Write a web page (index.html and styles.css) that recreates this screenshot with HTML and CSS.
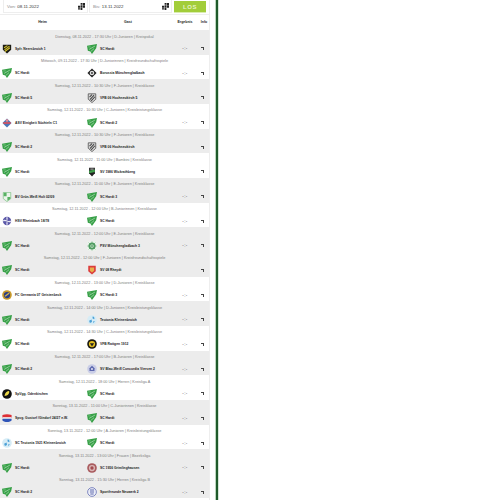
FILE: index.html
```html
<!DOCTYPE html>
<html lang="de">
<head>
  <meta charset="UTF-8" />
  <title>Spielplan - SC Hardt</title>
  <link rel="stylesheet" href="styles.css">
</head>
<body>
  <svg class="defs" width="0" height="0">
    <symbol id="hardt" viewBox="0 0 24 24">
      <path d="M0 4 L24 0 L22 10 L12 24 L8 18 L2 16 Z" fill="#37a047"/>
      <path d="M5 13 L19 5 M9 18 L17 11" fill="none" stroke="#bfe4c3" stroke-width="1.500"/>
      <path d="M3 7 L9 7" fill="none" stroke="#8fd097" stroke-width="1.500"/>
    </symbol>
    <symbol id="neers" viewBox="0 0 24 24">
      <path d="M2 2 H22 V14 L12 23 L2 14 Z" fill="#1c1c14"/>
      <path d="M6 14 L18 5 M7 18 L19 9 M5 9 L13 4" stroke="#d8c52c" stroke-width="2.500"/>
    </symbol>
    <symbol id="borussia" viewBox="0 0 24 24">
      <path d="M12 1 L23 12 L12 23 L1 12 Z" fill="#222"/>
      <circle cx="12" cy="12" r="5.500" fill="#ddd"/>
      <circle cx="12" cy="12" r="2.500" fill="#444"/>
    </symbol>
    <symbol id="vfb" viewBox="0 0 24 24">
      <path d="M3 2 H21 V15 L12 23 L3 15 Z" fill="#ddd" stroke="#555" stroke-width="2"/>
      <path d="M7 16 L17 5 M10 19 L19 9 M6 10 L12 4" stroke="#444" stroke-width="2.500"/>
    </symbol>
    <symbol id="asv" viewBox="0 0 24 24">
      <path d="M12 1 L23 12 L12 23 L1 12 Z" fill="#4a78b8"/>
      <path d="M3 10 H21 V14 H3 Z" fill="#d9505c"/>
      <circle cx="12" cy="6" r="3" fill="#e98a90"/>
    </symbol>
    <symbol id="wick" viewBox="0 0 24 24">
      <path d="M5 2 H19 V15 L12 23 L5 15 Z" fill="#222"/>
      <path d="M5 9 L19 6 V12 L5 15 Z" fill="#3f9c4a"/>
      <path d="M8 5 H16" stroke="#ddd" stroke-width="2"/>
    </symbol>
    <symbol id="holt" viewBox="0 0 24 24">
      <path d="M3 1 H21 V16 L12 23 L3 16 Z" fill="#eaf5ea" stroke="#6dbb75" stroke-width="1.500"/>
      <path d="M4 2 H11 V10 H4 Z M13 12 H20 V17 L13 21 Z" fill="#58b163"/>
    </symbol>
    <symbol id="vsv" viewBox="0 0 24 24">
      <circle cx="12" cy="12" r="10" fill="#5b58a8"/>
      <path d="M3 12 C8 6 16 18 21 12 M12 3 V9 M12 15 V21" stroke="#e8e8f2" stroke-width="3" fill="none"/>
    </symbol>
    <symbol id="psv" viewBox="0 0 24 24">
      <path d="M1 1 H23 V23 H1 Z" fill="#edf5ed"/>
      <circle cx="12" cy="12" r="8.500" fill="#4f9c62"/>
      <circle cx="12" cy="12" r="4.500" fill="#d8ecd9"/>
      <path d="M12 1 V23 M1 12 H23 M4 4 L20 20 M20 4 L4 20" stroke="#4f9c62" stroke-width="2" opacity=".7"/>
    </symbol>
    <symbol id="rheydt" viewBox="0 0 24 24">
      <path d="M3 2 H21 V15 L12 23 L3 15 Z" fill="#dc3c3c"/>
      <path d="M7 6 H17 V14 L12 18 L7 14 Z" fill="#e6b04a"/>
    </symbol>
    <symbol id="germania" viewBox="0 0 24 24">
      <circle cx="12" cy="12" r="11.500" fill="#c99a2b"/>
      <circle cx="12" cy="12" r="7.500" fill="#2c3f86"/>
      <path d="M7 15 L17 8" stroke="#dcb84a" stroke-width="3"/>
    </symbol>
    <symbol id="teutonia" viewBox="0 0 24 24">
      <circle cx="12" cy="12" r="11.500" fill="#d6ecf6"/>
      <path d="M14 3 C18 5 19 8 17 10 L13 8 Z M5 14 L11 11 L12 17 L7 19 Z M15 15 L19 15 L15 20 Z" fill="#4b9fd6"/>
    </symbol>
    <symbol id="rattgen" viewBox="0 0 24 24">
      <circle cx="12" cy="12" r="11.500" fill="#1b1a12"/>
      <circle cx="12" cy="12" r="7.500" fill="#e4c020"/>
      <path d="M7 10 H17 L12 18 Z" fill="#222"/>
    </symbol>
    <symbol id="viersen" viewBox="0 0 24 24">
      <circle cx="12" cy="12" r="11.500" fill="#c9cde6"/>
      <path d="M12 4 L18 10 V17 H6 V10 Z" fill="#5d68ae"/>
      <circle cx="12" cy="12" r="2.500" fill="#dfe2f2"/>
    </symbol>
    <symbol id="odenk" viewBox="0 0 24 24">
      <circle cx="12" cy="12" r="11.500" fill="#111"/>
      <path d="M6 17 C7 9 12 5 17 5 C19 10 14 17 6 17 Z" fill="#ecd848"/>
    </symbol>
    <symbol id="gustorf" viewBox="0 0 24 24">
      <path d="M1 5 C8 2 16 2 23 5 V12 H1 Z" fill="#dd2f35"/>
      <path d="M1 10 H23 V14 H1 Z" fill="#f2f2f2"/>
      <path d="M1 14 H23 V18 C16 23 8 23 1 18 Z" fill="#2f55b8"/>
    </symbol>
    <symbol id="grim" viewBox="0 0 24 24">
      <circle cx="12" cy="12" r="11.500" fill="#a95b5e"/>
      <circle cx="12" cy="12" r="7.500" fill="#d9b6b6"/>
      <circle cx="12" cy="12" r="4" fill="#a24a4e"/>
    </symbol>
    <symbol id="neuwerk" viewBox="0 0 24 24">
      <circle cx="12" cy="12" r="10.500" fill="#eef0f8" stroke="#6a74b8" stroke-width="2"/>
      <path d="M7 7 H17 M7 12 H17 M8 17 H16" stroke="#5d68ae" stroke-width="2.500"/>
    </symbol>
  </svg>

  <main class="plan">
    <form class="filter">
      <label class="date-field from">
        <span class="date-label">Von:</span> <span class="date-value">08.11.2022</span>
        <svg class="cal" viewBox="0 0 8 8"><path d="M3 0H5V2H3ZM5.500 0H8V3H5.500ZM0 3H2.500V5.500H0ZM3 2.500H5V5H3ZM5.500 3.500H8V5.500H5.500ZM3 5.500H5V8H3ZM0 6H2.500V7.500H0Z"/></svg>
      </label>
      <label class="date-field to">
        <span class="date-label">Bis:</span> <span class="date-value">13.11.2022</span>
        <svg class="cal" viewBox="0 0 8 8"><path d="M3 0H5V2H3ZM5.500 0H8V3H5.500ZM0 3H2.500V5.500H0ZM3 2.500H5V5H3ZM5.500 3.500H8V5.500H5.500ZM3 5.500H5V8H3ZM0 6H2.500V7.500H0Z"/></svg>
      </label>
      <button class="go" type="button">LOS</button>
    </form>

    <div class="head-row">
      <div>Heim</div>
      <div>Gast</div>
      <div>Ergebnis</div>
      <div>Info</div>
    </div>

    <section class="match grey">
      <p class="when">Dienstag, 08.11.2022 - 17:30 Uhr | D-Junioren | Kreispokal</p>
      <div class="teams">
        <div class="team"><svg class="logo"><use href="#neers"/></svg>Spfr. Neersbroich 1</div>
        <div class="team"><svg class="logo"><use href="#hardt"/></svg>SC Hardt</div>
        <div class="result">-:-</div>
        <div class="info"><i></i></div>
      </div>
    </section>

    <section class="match">
      <p class="when">Mittwoch, 09.11.2022 - 17:30 Uhr | D-Juniorinnen | Kreisfreundschaftsspiele</p>
      <div class="teams">
        <div class="team"><svg class="logo"><use href="#hardt"/></svg>SC Hardt</div>
        <div class="team"><svg class="logo"><use href="#borussia"/></svg>Borussia Mönchengladbach</div>
        <div class="result">-:-</div>
        <div class="info"><i></i></div>
      </div>
    </section>

    <section class="match grey">
      <p class="when">Samstag, 12.11.2022 - 10:30 Uhr | F-Junioren | Kreisklasse</p>
      <div class="teams">
        <div class="team"><svg class="logo"><use href="#hardt"/></svg>SC Hardt 5</div>
        <div class="team"><svg class="logo"><use href="#vfb"/></svg>VFB 06 Hochneukirch 5</div>
        <div class="result"></div>
        <div class="info"><i></i></div>
      </div>
    </section>

    <section class="match">
      <p class="when">Samstag, 12.11.2022 - 10:30 Uhr | C-Junioren | Kreisleistungsklasse</p>
      <div class="teams">
        <div class="team"><svg class="logo"><use href="#asv"/></svg>ASV Einigkeit Süchteln C1</div>
        <div class="team"><svg class="logo"><use href="#hardt"/></svg>SC Hardt 2</div>
        <div class="result">-:-</div>
        <div class="info"><i></i></div>
      </div>
    </section>

    <section class="match grey">
      <p class="when">Samstag, 12.11.2022 - 10:30 Uhr | F-Junioren | Kreisklasse</p>
      <div class="teams">
        <div class="team"><svg class="logo"><use href="#hardt"/></svg>SC Hardt 2</div>
        <div class="team"><svg class="logo"><use href="#vfb"/></svg>VFB 06 Hochneukirch</div>
        <div class="result"></div>
        <div class="info"><i></i></div>
      </div>
    </section>

    <section class="match">
      <p class="when">Samstag, 12.11.2022 - 11:00 Uhr | Bambini | Kreisklasse</p>
      <div class="teams">
        <div class="team"><svg class="logo"><use href="#hardt"/></svg>SC Hardt</div>
        <div class="team"><svg class="logo"><use href="#wick"/></svg>SV 1986 Wickrathberg</div>
        <div class="result"></div>
        <div class="info"><i></i></div>
      </div>
    </section>

    <section class="match grey">
      <p class="when">Samstag, 12.11.2022 - 11:00 Uhr | E-Junioren | Kreisklasse</p>
      <div class="teams">
        <div class="team"><svg class="logo"><use href="#holt"/></svg>BV Grün-Weiß Holt 02/09</div>
        <div class="team"><svg class="logo"><use href="#hardt"/></svg>SC Hardt 3</div>
        <div class="result">-:-</div>
        <div class="info"><i></i></div>
      </div>
    </section>

    <section class="match">
      <p class="when">Samstag, 12.11.2022 - 12:00 Uhr | B-Juniorinnen | Kreisklasse</p>
      <div class="teams">
        <div class="team"><svg class="logo"><use href="#vsv"/></svg>HSV Rheinbach 18/78</div>
        <div class="team"><svg class="logo"><use href="#hardt"/></svg>SC Hardt</div>
        <div class="result">-:-</div>
        <div class="info"><i></i></div>
      </div>
    </section>

    <section class="match grey">
      <p class="when">Samstag, 12.11.2022 - 12:00 Uhr | E-Junioren | Kreisklasse</p>
      <div class="teams">
        <div class="team"><svg class="logo"><use href="#hardt"/></svg>SC Hardt</div>
        <div class="team"><svg class="logo"><use href="#psv"/></svg>PSV Mönchengladbach 3</div>
        <div class="result">-:-</div>
        <div class="info"><i></i></div>
      </div>
    </section>

    <section class="match grey">
      <p class="when">Samstag, 12.11.2022 - 12:00 Uhr | F-Junioren | Kreisfreundschaftsspiele</p>
      <div class="teams">
        <div class="team"><svg class="logo"><use href="#hardt"/></svg>SC Hardt</div>
        <div class="team"><svg class="logo"><use href="#rheydt"/></svg>SV 08 Rheydt</div>
        <div class="result"></div>
        <div class="info"><i></i></div>
      </div>
    </section>

    <section class="match">
      <p class="when">Samstag, 12.11.2022 - 13:00 Uhr | D-Junioren | Kreisklasse</p>
      <div class="teams">
        <div class="team"><svg class="logo"><use href="#germania"/></svg>FC Germania 07 Geistenbeck</div>
        <div class="team"><svg class="logo"><use href="#hardt"/></svg>SC Hardt 3</div>
        <div class="result">-:-</div>
        <div class="info"><i></i></div>
      </div>
    </section>

    <section class="match grey">
      <p class="when">Samstag, 12.11.2022 - 14:00 Uhr | D-Junioren | Kreisleistungsklasse</p>
      <div class="teams">
        <div class="team"><svg class="logo"><use href="#hardt"/></svg>SC Hardt</div>
        <div class="team"><svg class="logo"><use href="#teutonia"/></svg>Teutonia Kleinenbroich</div>
        <div class="result">-:-</div>
        <div class="info"><i></i></div>
      </div>
    </section>

    <section class="match">
      <p class="when">Samstag, 12.11.2022 - 14:30 Uhr | C-Junioren | Kreisleistungsklasse</p>
      <div class="teams">
        <div class="team"><svg class="logo"><use href="#hardt"/></svg>SC Hardt</div>
        <div class="team"><svg class="logo"><use href="#rattgen"/></svg>VFB Rattgen 1912</div>
        <div class="result">-:-</div>
        <div class="info"><i></i></div>
      </div>
    </section>

    <section class="match grey">
      <p class="when">Samstag, 12.11.2022 - 17:00 Uhr | B-Junioren | Kreisklasse</p>
      <div class="teams">
        <div class="team"><svg class="logo"><use href="#hardt"/></svg>SC Hardt 2</div>
        <div class="team"><svg class="logo"><use href="#viersen"/></svg>SV Blau-Weiß Concordia Viersen 2</div>
        <div class="result">-:-</div>
        <div class="info"><i></i></div>
      </div>
    </section>

    <section class="match">
      <p class="when">Samstag, 12.11.2022 - 18:00 Uhr | Herren | Kreisliga A</p>
      <div class="teams">
        <div class="team"><svg class="logo"><use href="#odenk"/></svg>SpVgg. Odenkirchen</div>
        <div class="team"><svg class="logo"><use href="#hardt"/></svg>SC Hardt</div>
        <div class="result">-:-</div>
        <div class="info"><i></i></div>
      </div>
    </section>

    <section class="match grey">
      <p class="when">Sonntag, 13.11.2022 - 11:00 Uhr | C-Juniorinnen | Kreisklasse</p>
      <div class="teams">
        <div class="team"><svg class="logo"><use href="#gustorf"/></svg>Spvg. Gustorf /Gindorf 24/27 e.W.</div>
        <div class="team"><svg class="logo"><use href="#hardt"/></svg>SC Hardt</div>
        <div class="result">-:-</div>
        <div class="info"><i></i></div>
      </div>
    </section>

    <section class="match">
      <p class="when">Sonntag, 13.11.2022 - 12:00 Uhr | A-Junioren | Kreisleistungsklasse</p>
      <div class="teams">
        <div class="team"><svg class="logo"><use href="#teutonia"/></svg>SC Teutonia 1921 Kleinenbroich</div>
        <div class="team"><svg class="logo"><use href="#hardt"/></svg>SC Hardt</div>
        <div class="result">-:-</div>
        <div class="info"><i></i></div>
      </div>
    </section>

    <section class="match grey">
      <p class="when">Sonntag, 13.11.2022 - 13:00 Uhr | Frauen | Bezirksliga</p>
      <div class="teams">
        <div class="team"><svg class="logo"><use href="#hardt"/></svg>SC Hardt</div>
        <div class="team"><svg class="logo"><use href="#grim"/></svg>SC 1956 Grimlinghausen</div>
        <div class="result">-:-</div>
        <div class="info"><i></i></div>
      </div>
    </section>

    <section class="match grey">
      <p class="when">Sonntag, 13.11.2022 - 15:30 Uhr | Herren | Kreisliga B</p>
      <div class="teams">
        <div class="team"><svg class="logo"><use href="#hardt"/></svg>SC Hardt 2</div>
        <div class="team"><svg class="logo"><use href="#neuwerk"/></svg>Sportfreunde Neuwerk 2</div>
        <div class="result">-:-</div>
        <div class="info"><i></i></div>
      </div>
    </section>
  </main>

  <div class="page-edge"></div>
</body>
</html>
```

FILE: styles.css
```css
* {
  box-sizing: border-box;
  margin: 0;
  padding: 0;
}

html {
  overflow: hidden;
}

body {
  display: flex;
  height: 100vh;
  overflow: hidden;
  background-color: white;
  font-family: "Liberation Sans", Arial, sans-serif;
  color: #222;
}

.defs {
  position: absolute;
}

.plan {
  flex: 0 0 210px;
  border-right: 1px solid #eeeeee;
  font-size: 3.35px;
}

.page-edge {
  flex: 0 0 4px;
  margin-left: 5px;
  background-color: #1f5a2a;
  border-left: 1px solid #bcd6bf;
  border-right: 1px solid #d5e6d7;
}

/* date filter */
.filter {
  display: flex;
  align-items: stretch;
  height: 15px;
  padding: 0 3px 1px 3px;
  border-bottom: 1px solid #eeeeee;
}

.date-field {
  display: flex;
  align-items: center;
  gap: 1.5px;
  padding: 0 2px 0 3px;
  border: 1px solid #eeeeee;
  border-top: 0;
  font-size: 4.4px;
}

.from {
  flex: 0 0 85px;
  margin-right: 1px;
}

.to {
  flex: 0 0 83px;
  margin-right: 2px;
}

.date-label {
  color: #888;
}

.date-value {
  color: #333;
}

.cal {
  width: 7px;
  height: 7px;
  margin-left: auto;
  fill: #222;
}

.go {
  flex: 0 0 32px;
  margin-top: 1px;
  border: 0;
  border-bottom: 1px solid #d9ebb0;
  background-color: #a2cd3a;
  color: #e6f3c4;
  font-family: inherit;
  font-size: 6px;
  font-weight: bold;
  letter-spacing: 0.5px;
}

/* table */
.head-row,
.teams {
  display: grid;
  grid-template-columns: 85px 86px 28px 10px;
  align-items: center;
}

.head-row {
  height: 15px;
  padding-bottom: 2px;
  font-size: 3.5px;
  font-weight: bold;
  text-align: center;
}

.match {
  height: 24.67px;
}

.grey {
  background-color: #ececec;
}

.when {
  height: 12.5px;
  padding-top: 2.5px;
  font-size: 3.8px;
  line-height: 9px;
  text-align: center;
  color: #808080;
}

.teams {
  height: 12.17px;
}

.team {
  display: flex;
  align-items: center;
  gap: 3px;
  padding-left: 2px;
  font-weight: bold;
  white-space: nowrap;
  overflow: hidden;
}

.logo {
  flex: 0 0 10px;
  width: 10px;
  height: 10px;
}

.result {
  text-align: center;
  color: #555;
  font-size: 4.5px;
  letter-spacing: 0.4px;
}

.info {
  display: flex;
  justify-content: center;
  padding-right: 3px;
}

.info i {
  display: block;
  width: 3px;
  height: 3px;
  border-top: 1px solid #444;
  border-right: 1px solid #444;
}
```
